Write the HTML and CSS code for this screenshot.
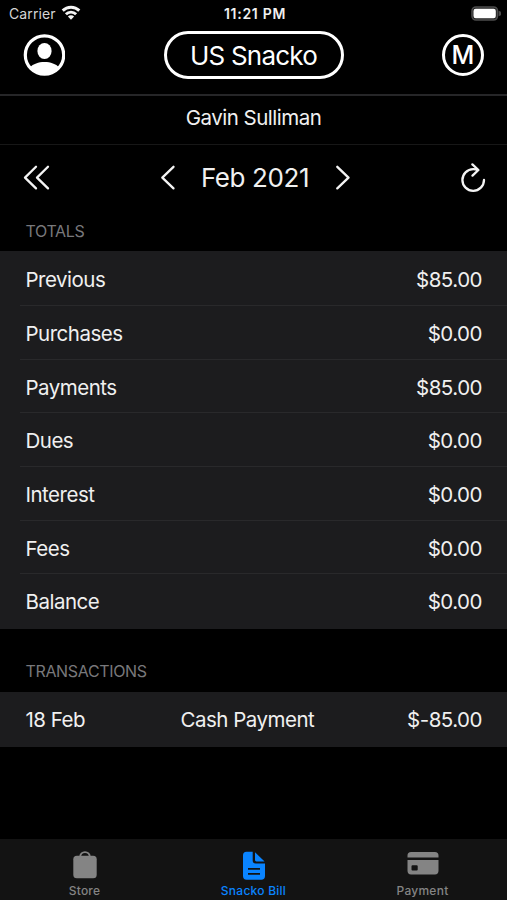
FILE: index.html
```html
<!DOCTYPE html>
<html lang="en">
<head>
<meta charset="utf-8">
<title>Snacko Bill</title>
<link rel="stylesheet" href="styles.css">
</head>
<body>
<div class="status">
  <div class="carrier"><span>Carrier</span>
    <svg width="20" height="15" viewBox="0 0 20 15" fill="none" stroke="#f4f4f4" stroke-width="2.9"><path d="M1.700 5.600a11.800 11.800 0 0 1 16.600 0"/><path d="M4.900 9.200a7.200 7.200 0 0 1 10.200 0"/><path d="M10 14.700 6.900 11.600a4.400 4.400 0 0 1 6.200 0z" fill="#f4f4f4" stroke="none"/></svg>
  </div>
  <span class="clock">11:21 PM</span>
  <svg class="battery" width="30" height="15" viewBox="0 0 30 15"><rect x="1" y="1" width="25.500" height="13" rx="4" fill="#222" stroke="#4c4c4c" stroke-width="1.600"/><rect x="2.500" y="2.800" width="22.300" height="9.400" rx="2.200" fill="#fff"/><path d="M27.700 5a2.500 2.500 0 0 1 0 5z" fill="#4c4c4c"/></svg>
</div>
<header class="header">
  <svg width="42" height="42" viewBox="0 0 42 42"><circle cx="21.500" cy="21" r="19.200" fill="none" stroke="#fff" stroke-width="3.200"/><ellipse cx="21.500" cy="17" rx="7.100" ry="8" fill="#fff"/><path d="M6.900 33.500C10 29.900 15.500 28 21.500 28s11.500 1.900 14.600 5.500C32.500 38 27.500 40.500 21.500 40.500S10.500 38 6.900 33.500z" fill="#fff"/></svg>
  <div class="pill"><span>US Snacko</span></div>
  <div class="badge">M</div>
</header>
<div class="person">Gavin Sulliman</div>
<nav class="month">
  <svg width="28" height="26" viewBox="0 0 28 26" class="line"><path d="M13 1.800 2 12.600l11 10.800M25 1.800 14 12.600l11 10.800"/></svg>
  <div class="picker">
    <svg width="16" height="26" viewBox="0 0 16 26" class="line"><path d="M13.500 1.800 2.300 12.600l11.200 10.800"/></svg>
    <span>Feb 2021</span>
    <svg width="16" height="26" viewBox="0 0 16 26" class="line"><path d="M3.300 1.800 14.500 12.600 3.300 23.400"/></svg>
  </div>
  <svg width="26" height="30" viewBox="0 0 26 30" class="line reload"><path d="M13 6.200H12.200A10.800 10.800 0 1 0 23 17M11.400 1.400l6 5.600-5.900 5.600M12.200 6.200q2.500 0 4.400.7"/></svg>
</nav>
<h2 class="title">TOTALS</h2>
<section class="totals">
  <div class="row"><span>Previous</span><span>$85.00</span></div>
  <div class="row"><span>Purchases</span><span>$0.00</span></div>
  <div class="row"><span>Payments</span><span>$85.00</span></div>
  <div class="row"><span>Dues</span><span>$0.00</span></div>
  <div class="row"><span>Interest</span><span>$0.00</span></div>
  <div class="row"><span>Fees</span><span>$0.00</span></div>
  <div class="row"><span>Balance</span><span>$0.00</span></div>
</section>
<h2 class="title second">TRANSACTIONS</h2>
<section class="transaction"><span>18 Feb</span><span>Cash Payment</span><span>$-85.00</span></section>
<footer class="tabs">
  <div class="tab"><svg width="34" height="30" viewBox="0 0 34 30"><path d="M12.200 8V6.900a4.800 4.800 0 0 1 9.600 0V8" fill="none" stroke="#848484" stroke-width="1.900"/><rect x="5.300" y="5.800" width="23.400" height="22.400" rx="3.500" fill="#848484"/></svg><span>Store</span></div>
  <div class="tab active"><svg width="34" height="30" viewBox="0 0 34 30"><path fill="#0a84ff" d="M9.500 1.800H15.700V10.500Q15.700 13.400 18.600 13.400H28V26Q28 29.700 24.300 29.700H9.500Q6 29.700 6 26V5.300Q6 1.800 9.500 1.800zM18 2.200 27.600 11.500H19.400Q18 11.500 18 10.100z"/><path d="M11 18.800h12M11 23.800h12" stroke="#131313" stroke-width="1.700"/></svg><span>Snacko Bill</span></div>
  <div class="tab"><svg width="34" height="30" viewBox="0 0 34 30"><path fill="#848484" fill-rule="evenodd" d="M1.500 7.400V5.500Q1.500 1.900 5.100 1.900H28.900Q32.500 1.900 32.500 5.500V7.400zM1.500 10H32.500V20.800Q32.500 24.400 28.900 24.400H5.100Q1.500 24.400 1.500 20.800zM6.500 15.200Q5.500 15.200 5.500 16.200V19.500Q5.500 20.500 6.500 20.500H10.700Q11.700 20.500 11.700 19.500V16.200Q11.700 15.200 10.700 15.200z"/></svg><span>Payment</span></div>
</footer>
</body>
</html>
```
FILE: styles.css
```css
* { box-sizing: border-box; }
body { margin: 0; height: 900px; display: flex; flex-direction: column; overflow: hidden; background: #000; color: #f0f0f0; font-family: Inter, "Liberation Sans", sans-serif; font-size: 20.500px; letter-spacing: -.5px; white-space: nowrap; }
svg { display: block; flex: none; }
.status { flex: none; height: 27px; padding: 0 6px 0 9px; display: grid; grid-template-columns: 1fr auto 1fr; align-items: center; }
.carrier { display: flex; align-items: center; gap: 6px; font-size: 14px; letter-spacing: .1px; color: #d5d5d5; }
.carrier svg { margin: -3px 0 0 -1px; }
.clock { font-size: 14px; font-weight: 600; letter-spacing: .7px; }
.battery { justify-self: end; }
.header { flex: none; height: 69px; padding: 4px 23px 0; display: flex; justify-content: space-between; align-items: flex-start; border-bottom: 2px solid #262628; color: #fff; }
.header > svg { margin-top: 3px; }
.pill { width: 180px; height: 48px; border: 3px solid #fff; border-radius: 24px; display: flex; align-items: center; justify-content: center; font-size: 26px; letter-spacing: -.8px; }
.badge { width: 42px; height: 42px; margin-top: 3px; border: 3px solid #fff; border-radius: 50%; display: flex; align-items: center; justify-content: center; font-size: 25px; letter-spacing: 0; font-weight: 500; }
.person { flex: none; height: 49px; padding-bottom: 5px; display: flex; align-items: center; justify-content: center; border-bottom: 1px solid #171717; }
.month { flex: none; height: 65px; padding: 0 20px 0 23px; display: grid; grid-template-columns: 1fr auto 1fr; align-items: center; }
.picker { display: flex; align-items: center; gap: 25px; font-size: 26px; letter-spacing: -.4px; }
.line { fill: none; stroke: #f4f4f4; stroke-width: 2.300; stroke-linecap: round; stroke-linejoin: round; }
.reload { justify-self: end; }
.title { flex: none; height: 41px; margin: 0; padding: 11px 25.500px 0; font-size: 16px; line-height: 20px; font-weight: 400; letter-spacing: -.35px; color: #78787b; }
.totals { flex: none; background: #1c1c1e; height: 378px; display: grid; grid-template-rows: 55px repeat(6, 53.700px); }
.row { margin-left: 20px; padding: 2px 25px 0 5.500px; display: flex; justify-content: space-between; align-items: center; border-bottom: 1px solid #29292b; }
.row:last-child { border-color: transparent; }
.second { height: 63px; padding-top: 32px; }
.transaction { flex: none; height: 55px; padding: 0 25px 1px 25.500px; background: #1c1c1e; display: grid; grid-template-columns: 155px 1fr auto; align-items: center; }
.tabs { margin-top: auto; height: 61px; padding-top: 11px; display: grid; grid-template-columns: repeat(3, 1fr); background: #131313; }
.tab { display: flex; flex-direction: column; align-items: center; gap: 3px; color: #848484; font-size: 12px; line-height: 15px; font-weight: 500; letter-spacing: .25px; }
.active { color: #0a84ff; }
```
